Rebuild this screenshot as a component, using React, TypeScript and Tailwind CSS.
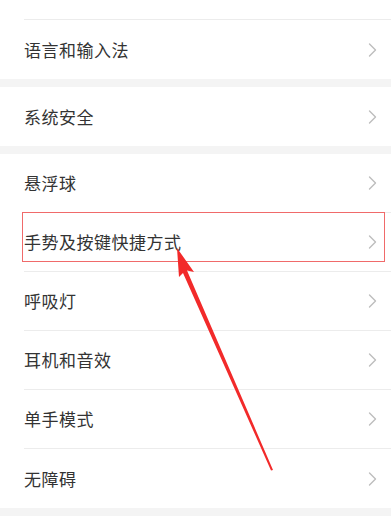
import React from "react";

const font = { fontFamily: '"Noto Sans CJK SC", "Noto Sans", sans-serif' };

const Chevron = () => (
  <svg width="9" height="14" viewBox="0 0 9 14" fill="none" className="shrink-0">
    <path d="M1.5 1 L7.5 7 L1.5 13" stroke="#bdbdbd" strokeWidth="1.4" strokeLinejoin="round" strokeLinecap="round" />
  </svg>
);

const Row = ({ label, divider = true, boxed = false }: { label: string; divider?: boolean; boxed?: boolean }) => (
  <div className="relative pl-6 bg-white">
    <div className={`flex items-center h-[59px] pr-[14px] ${divider ? "border-b border-[#ececec]" : ""}`}>
      <span className="flex-1 text-[17px] text-[#333333] tracking-[0.5px]">{label}</span>
      <Chevron />
    </div>
    {boxed && (
      <div className="absolute left-[22px] right-[6px] top-[-1px] h-[50px] border-[1.5px] border-[#f06a6a] pointer-events-none" />
    )}
  </div>
);

const Gap = () => <div className="h-2 bg-[#f4f4f4]" />;

export default function App() {
  return (
    <div className="relative w-[391px] h-[523px] overflow-hidden bg-white" style={font}>
      <div className="-mt-[39px]">
        <Row label="显示与亮度" />
        <Row label="语言和输入法" divider={false} />
      </div>
      <Gap />
      <Row label="系统安全" divider={false} />
      <Gap />
      <Row label="悬浮球" />
      <Row label="手势及按键快捷方式" boxed />
      <Row label="呼吸灯" />
      <Row label="耳机和音效" />
      <Row label="单手模式" />
      <Row label="无障碍" divider={false} />
      <Gap />

      <svg className="absolute inset-0 pointer-events-none" width="391" height="523" viewBox="0 0 391 523">
        <polygon
          points="177,248 194,272 187,270.5 273,470 271,470.5 183,273 179,277"
          fill="#f22a2a"
        />
      </svg>
    </div>
  );
}
